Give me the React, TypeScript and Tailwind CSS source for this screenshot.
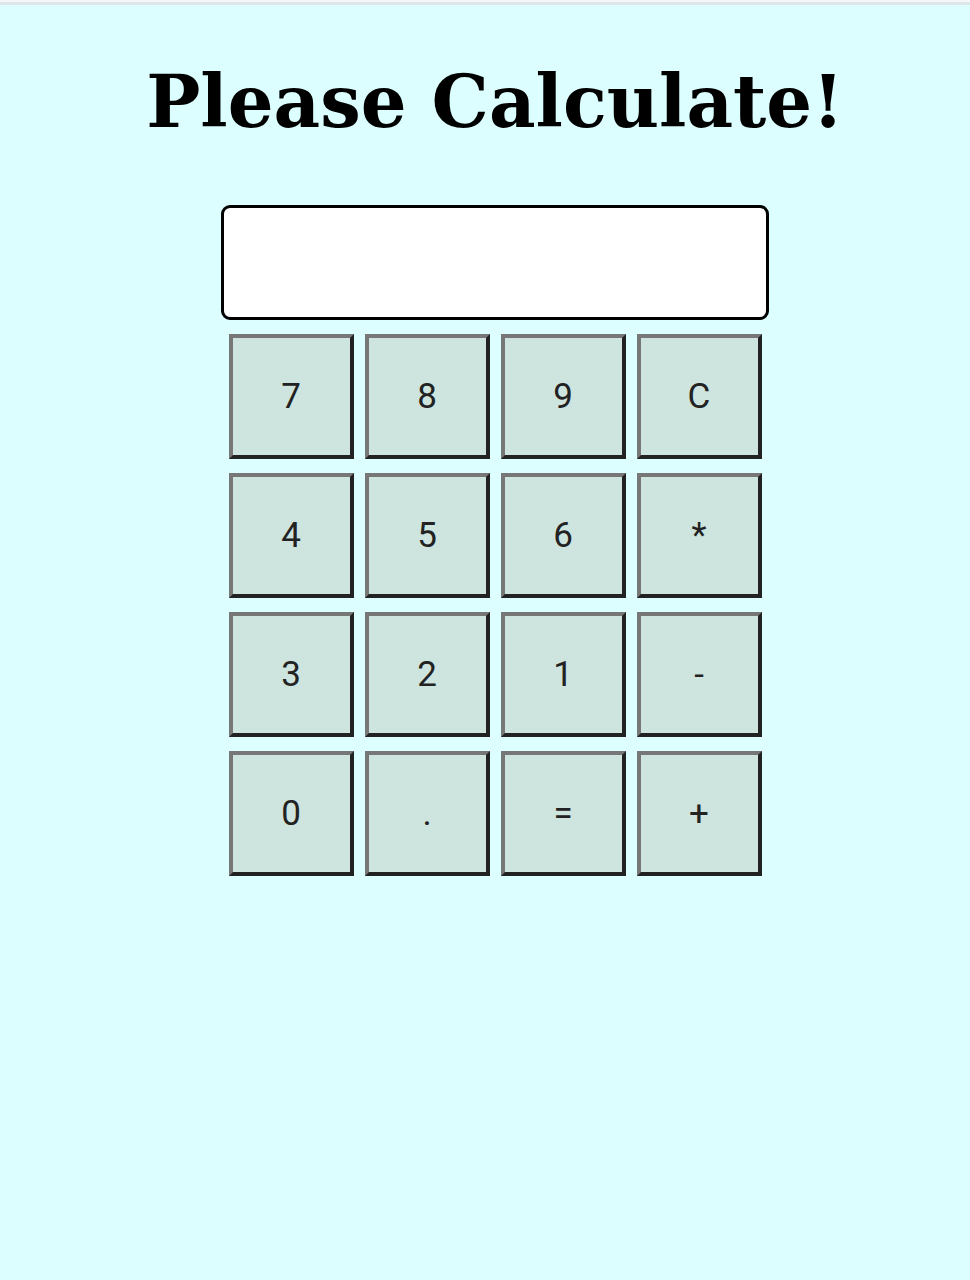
export default function App() {
  const keys = ['7', '8', '9', 'C', '4', '5', '6', '*', '3', '2', '1', '-', '0', '.', '=', '+'];

  return (
    <div className="min-h-[1280px] bg-[#dcfefe]">
      <div className="h-[2px] bg-[#f4f7f8]" />
      <div className="h-[3px] bg-[#dfe6e9]" />
      <div className="flex flex-col items-center pl-[20px]">
        <h1 className="mt-[52px] text-[72px] leading-[90px] font-bold text-black font-['DejaVu_Serif',serif]">
          Please Calculate!
        </h1>
        <div className="mt-[58px] h-[115px] w-[548px] rounded-[9px] border-[3px] border-black bg-white" />
        <div className="mt-[14px] grid grid-cols-4 gap-x-[11px] gap-y-[14px]">
          {keys.map((k) => (
            <button
              key={k}
              className="flex h-[125px] w-[125px] items-center justify-center border-4 border-t-[#777777] border-l-[#777777] border-r-[#222222] border-b-[#222222] bg-[#cde5de] pt-[2px] text-[35px] text-[#222] font-['Roboto',sans-serif]"
            >
              {k}
            </button>
          ))}
        </div>
      </div>
    </div>
  );
}
